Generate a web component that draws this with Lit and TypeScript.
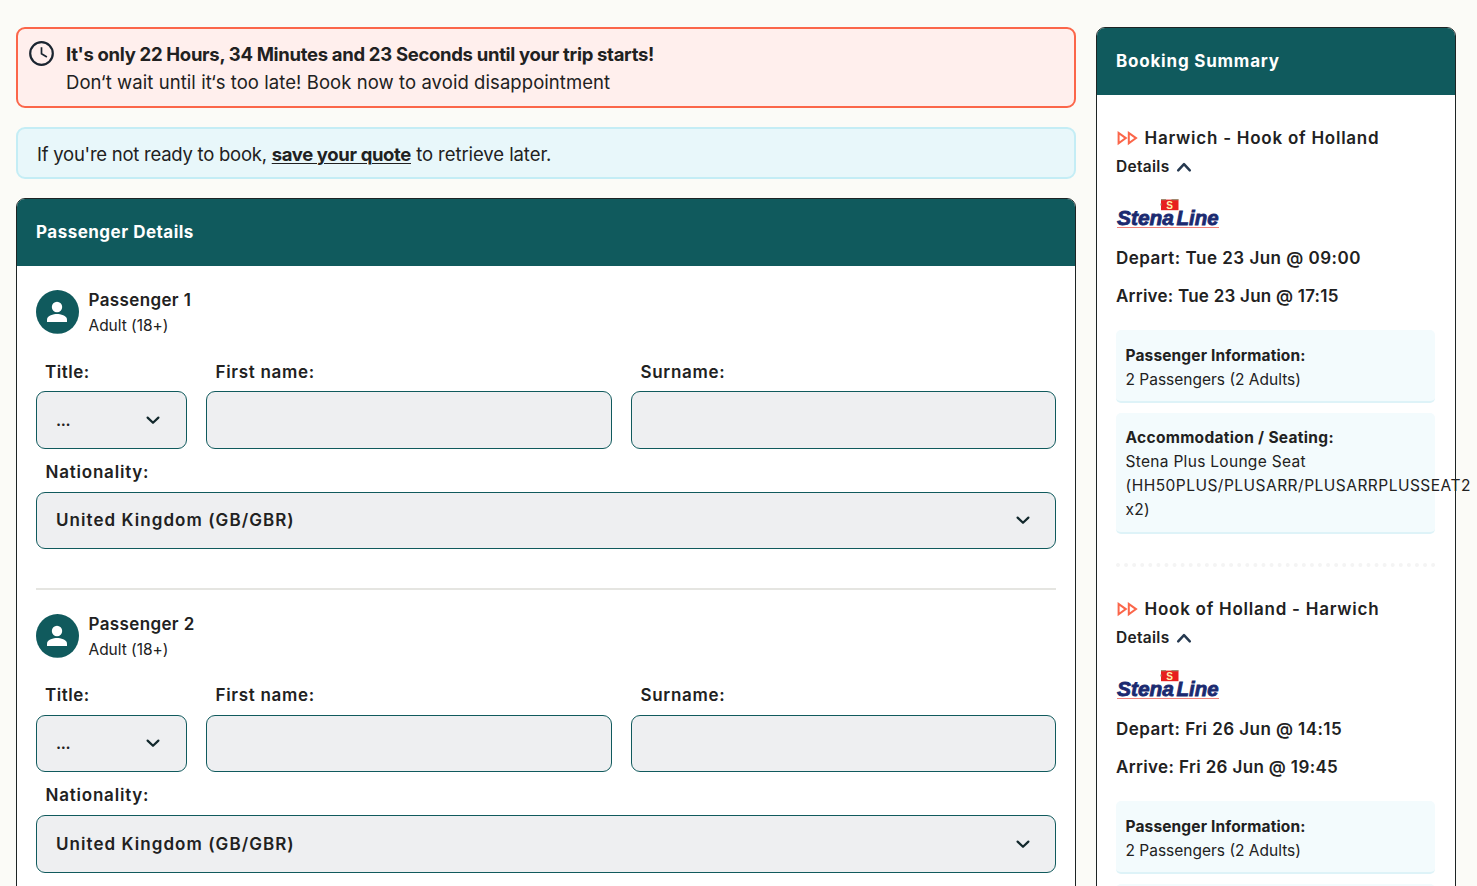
import { LitElement, html, css, svg, nothing } from "lit";
import { customElement, property } from "lit/decorators.js";

const chevron = (up: boolean) => html`<svg class="chevron ${up ? "up" : ""}" viewBox="0 0 16 16" width="16" height="16" aria-hidden="true">
  ${up
    ? svg`<path d="M2.2 11.3 8 5.2l5.800 6.100" fill="none" stroke="#25384f" stroke-width="2.500" stroke-linecap="round" stroke-linejoin="round" />`
    : svg`<path d="M2.600 5.600 8 10.800l5.400-5.200" fill="none" stroke="#12282c" stroke-width="2.200" stroke-linecap="round" stroke-linejoin="round" />`}
</svg>`;

@customElement("passenger-form")
class PassengerForm extends LitElement {
  @property({ type: Number }) number = 1;

  static styles = css`
    * { box-sizing: border-box; }
    :host { display: block; height: 323.700px; }
    .person { display: flex; align-items: center; height: 43.800px; }
    .avatar { width: 43px; height: 43.800px; display: block; flex: none; overflow: visible; }
    .who { margin-left: 9.500px; padding-top: 1.200px; }
    .name { font-size: 17px; line-height: 26px; font-weight: 600; letter-spacing: 0.370px; }
    .kind { font-size: 15.500px; line-height: 25px; letter-spacing: -0.040px; }
    .grid { display: grid; grid-template-columns: 151px 406px 425px; column-gap: 19px; margin-top: 25px; }
    .label { display: block; padding-left: 9.500px; height: 32.200px; line-height: 26px; font-size: 17px; font-weight: 600; letter-spacing: 0.700px; }
    .title { padding-left: 9px; letter-spacing: 0.500px; }
    .nat { height: 35px; line-height: 30px; letter-spacing: 0.790px; }
    .field { display: flex; align-items: center; justify-content: space-between; height: 57.600px; padding: 0 24px 0 19px; border: 1px solid #105a5d; border-radius: 9px; background: #eeeff1; font-size: 17px; font-weight: 600; }
    .short { padding-right: 25px; }
    .wide { letter-spacing: 1.060px; }
    .dots { letter-spacing: -0.400px; font-size: 16px; }
    .line { margin-top: 38.800px; height: 2px; background: #e5e5e1; }
    .chevron { flex: none; display: block; }
    .second { margin-top: 8px; }
  `;

  render() {
    return html`
      <div class="person">
        <svg class="avatar" viewBox="0 0 43 43.800">
          <ellipse cx="21.500" cy="21.900" rx="21.500" ry="21.900" fill="#105a5d" />
          <ellipse cx="21" cy="17" rx="5.200" ry="5.200" fill="#fff" />
          <path d="M11 32v-2.600c0-3.500 6.700-5.300 10-5.300s10 1.800 10 5.300V32z" fill="#fff" />
        </svg>
        <div class="who">
          <div class="name">Passenger ${this.number}</div>
          <div class="kind">Adult (18+)</div>
        </div>
      </div>
      <div class="grid">
        <div><span class="label title">Title:</span><div class="field short"><span class="dots">...</span>${chevron(false)}</div></div>
        <div><span class="label">First name:</span><div class="field"></div></div>
        <div><span class="label">Surname:</span><div class="field"></div></div>
      </div>
      <div class="second">
        <span class="label nat">Nationality:</span>
        <div class="field wide"><span>United Kingdom (GB/GBR)</span>${chevron(false)}</div>
      </div>
      <div class="line"></div>
    `;
  }
}

@customElement("trip-summary")
class TripSummary extends LitElement {
  @property() route = "";
  @property() depart = "";
  @property() arrive = "";
  @property() seat = "";
  @property() code = "";

  static styles = css`
    * { box-sizing: border-box; }
    :host { display: block; height: 471.200px; }
    .route { display: flex; align-items: center; height: 28px; font-size: 17px; font-weight: 600; letter-spacing: 0.750px; }
    .arrows { width: 22px; height: 16px; margin-right: 6.500px; flex: none; }
    .details { display: flex; align-items: center; height: 29.600px; gap: 6.200px; font-size: 15.500px; font-weight: 600; letter-spacing: 0.300px; }
    .logo { display: block; width: 105px; height: 32px; margin-top: 16.400px; }
    .brand { font: italic 700 20px "Liberation Sans", Arial, sans-serif; fill: #1b2a70; stroke: #1b2a70; stroke-width: 0.800px; }
    .flagmark { font: 700 10px "Liberation Sans", Arial, sans-serif; fill: #fff3b0; }
    .time { height: 38px; line-height: 38px; font-size: 17px; font-weight: 600; letter-spacing: 0.490px; }
    .arrival { letter-spacing: 0.240px; }
    :host([inbound]) .time { letter-spacing: 0.440px; }
    :host([inbound]) .arrival { letter-spacing: 0.360px; }
    .times { margin-top: 9px; }
    .box { background: #f3fbfd; border-bottom: 2px solid #def3f8; border-radius: 5px; padding: 13.700px 9.500px 9px; font-size: 15.500px; line-height: 24px; margin-top: 15.300px; }
    .box + .box { margin-top: 10.300px; padding: 12.700px 9.500px 9.800px; min-height: 120.500px; }
    .head { font-weight: 700; letter-spacing: 0.130px; }
    .seating { letter-spacing: 0.310px; }
    .seat { letter-spacing: 0.300px; }
    .code { letter-spacing: 0.480px; }
    .dotted { display: block; margin-top: 29px; width: 319px; height: 4px; }
  `;

  render() {
    return html`
      <div class="route">
        <svg class="arrows" viewBox="0 0 22 16" fill="none" stroke="#fb664a" stroke-width="2">
          <path d="M2.600 3v10.200L9.800 8.100zM12.800 3v10.200L20 8.100z" />
        </svg>
        <span>${this.route}</span>
      </div>
      <div class="details"><span>Details</span>${chevron(true)}</div>
      <svg class="logo" viewBox="0 0 105 32">
        <path d="M45 1.600h17.500v10.600H45z" fill="#e7201f" />
        <path d="M45 1.700h5M55.500 1.700h7M45 5.500v2" stroke="#a08a70" stroke-width="1.200" />
        <text class="flagmark" x="50.200" y="10.600">S</text>
        <text class="brand" x="1" y="27.200" textLength="57" lengthAdjust="spacingAndGlyphs">Stena</text>
        <text class="brand" x="60.500" y="27.200" textLength="42" lengthAdjust="spacingAndGlyphs">Line</text>
        <path d="M1 29.500h102" stroke="#f08078" stroke-width="1" />
      </svg>
      <div class="times">
        <div class="time">Depart: ${this.depart}</div>
        <div class="time arrival">Arrive: ${this.arrive}</div>
      </div>
      <div class="box">
        <div class="head">Passenger Information:</div>
        <div>2 Passengers (2 Adults)</div>
      </div>
      <div class="box">
        ${this.seat
          ? html`<div class="head seating">Accommodation / Seating:</div>
              <div class="seat">${this.seat} <span class="code">(${this.code}</span> x2)</div>`
          : nothing}
      </div>
      <svg class="dotted" viewBox="0 0 319 4">
        <path d="M2 2H319" stroke="#f4f4f4" stroke-width="4" stroke-linecap="round" stroke-dasharray="0 8.080" />
      </svg>
    `;
  }
}

@customElement("app-root")
class AppRoot extends LitElement {
  static styles = css`
    * { box-sizing: border-box; }
    :host { display: block; width: 100%; height: 886px; overflow: hidden; background: #fbfbf7; color: #212121; font-family: Inter, "Liberation Sans", sans-serif; font-size: 15.500px; }
    .page { display: grid; grid-template-columns: 1060px 360px; column-gap: 20px; align-items: start; padding: 27px 21px 0 16px; }
    .alert { display: flex; height: 81px; border: 2px solid #fb664a; border-radius: 9px; background: #ffefed; padding: 11px 11px 0 11px; font-size: 18.500px; line-height: 28px; }
    .clock { flex: none; width: 25px; height: 25px; margin: 0.500px 12px 0 0; }
    .strong { font-weight: 700; letter-spacing: -0.310px; }
    .soft { letter-spacing: 0.070px; }
    .quote { display: flex; align-items: center; height: 52px; margin-top: 19px; border: 2px solid #c4edf5; border-radius: 9px; background: #e8f7fa; padding: 2px 19px 0 19px; font-size: 18.500px; letter-spacing: -0.250px; }
    .quote a { color: inherit; font-weight: 700; letter-spacing: -0.360px; text-decoration: underline; text-decoration-thickness: 1px; text-underline-offset: 2px; }
    .later { letter-spacing: -0.070px; }
    .card { margin-top: 19px; height: 800px; border: 1px solid #1d2424; border-radius: 9px; background: #fff; }
    .side { margin-top: 0; height: 1060px; }
    .bar { height: 67px; display: flex; align-items: center; padding: 0 19px 2px; border-radius: 8px 8px 0 0; background: #105a5d; color: #fff; font-size: 17px; font-weight: 700; letter-spacing: 0.490px; }
    .booking { letter-spacing: 0.790px; }
    .forms { padding: 24px 19px 0; }
    .trips { padding: 29px 20px 0 19px; }
  `;

  render() {
    return html`
      <div class="page">
        <main>
          <section class="alert">
            <svg class="clock" viewBox="0 0 25 25" fill="none" stroke="#1b2530">
              <circle cx="12.500" cy="12.500" r="11.300" stroke-width="2.200" />
              <path d="M12.500 6.200v6.500l5.400 3.200" stroke-width="1.700" />
            </svg>
            <div>
              <div class="strong">It's only 22 Hours, 34 Minutes and 23 Seconds until your trip starts!</div>
              <div class="soft">Don‘t wait until it‘s too late! Book now to avoid disappointment</div>
            </div>
          </section>
          <section class="quote">
            <div>If you're not ready to book, <a>save your quote</a><span class="later"> to retrieve later.</span></div>
          </section>
          <section class="card">
            <div class="bar">Passenger Details</div>
            <div class="forms">
              <passenger-form .number=${1}></passenger-form>
              <passenger-form .number=${2}></passenger-form>
            </div>
          </section>
        </main>
        <aside class="card side">
          <div class="bar booking">Booking Summary</div>
          <div class="trips">
            <trip-summary route="Harwich - Hook of Holland" depart="Tue 23 Jun @ 09:00" arrive="Tue 23 Jun @ 17:15" seat="Stena Plus Lounge Seat" code="HH50PLUS/PLUSARR/PLUSARRPLUSSEAT2"></trip-summary>
            <trip-summary inbound route="Hook of Holland - Harwich" depart="Fri 26 Jun @ 14:15" arrive="Fri 26 Jun @ 19:45"></trip-summary>
          </div>
        </aside>
      </div>
    `;
  }
}
